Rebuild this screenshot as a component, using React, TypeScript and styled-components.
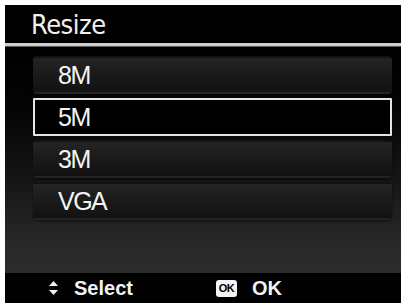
import React from "react";
import styled, { createGlobalStyle } from "styled-components";

const GlobalStyle = createGlobalStyle`
  html, body {
    margin: 0;
    padding: 0;
    background: #ffffff;
  }
  body {
    font-family: "Liberation Sans", Arial, sans-serif;
  }
`;

const Page = styled.div`
  width: 403px;
  height: 303px;
  padding: 5px 0 0 5px;
  box-sizing: border-box;
  overflow: hidden;
`;

const Screen = styled.div`
  width: 396px;
  height: 298px;
  background: #000;
  display: flex;
  flex-direction: column;
  color: #f2f2f2;
`;

const Header = styled.div`
  height: 38px;
  display: flex;
  align-items: center;
  padding-left: 26px;
  font-family: "Liberation Sans Narrow", "DejaVu Sans Condensed", "Liberation Sans", sans-serif;
  font-size: 27px;
  letter-spacing: -0.5px;
  color: #f0f0f0;
`;

const Divider = styled.div`
  height: 3px;
  background: #cfcfcf;
  border-bottom: 1px solid #5a5a5a;
`;

const Body = styled.div`
  flex: 1;
  display: flex;
  flex-direction: column;
  gap: 4px;
  padding: 9px 4px 0 28px;
  background: linear-gradient(
    to bottom,
    #000 0%,
    #050505 30%,
    #161616 60%,
    #272727 85%,
    #2c2c2c 100%
  );
`;

const Row = styled.div<{ $selected?: boolean }>`
  width: 359px;
  height: 38px;
  box-sizing: border-box;
  display: flex;
  align-items: center;
  padding-left: 23px;
  font-size: 25px;
  letter-spacing: -1.5px;
  color: #f4f4f4;
  border: 2px solid ${(p) => (p.$selected ? "#e4e4e4" : "transparent")};
  border-radius: ${(p) => (p.$selected ? "1px" : "4px")};
  background: ${(p) =>
    p.$selected
      ? "#000"
      : "linear-gradient(to bottom, #242424 0%, #1b1b1b 45%, #121212 100%)"};
  box-shadow: ${(p) => (p.$selected ? "none" : "0 1px 2px rgba(0,0,0,0.6)")};
`;

const Footer = styled.div`
  height: 30px;
  background: #000;
  display: flex;
  align-items: center;
  padding-left: 43px;
  font-weight: bold;
  font-size: 20px;
  color: #f2f2f2;
`;

const Hint = styled.div<{ $width?: number }>`
  display: flex;
  align-items: center;
  gap: 15px;
  width: ${(p) => (p.$width ? `${p.$width}px` : "auto")};
`;

const OkBadge = styled.span`
  width: 21px;
  height: 17px;
  border-radius: 3px;
  background: #f4f4f4;
  color: #000;
  font-size: 11px;
  font-weight: bold;
  letter-spacing: -0.5px;
  display: flex;
  align-items: center;
  justify-content: center;
`;

const items = ["8M", "5M", "3M", "VGA"];

const UpDownIcon = () => (
  <svg width="11" height="16" viewBox="0 0 11 16">
    <polygon points="5.5,1 10,6 1,6" fill="#f2f2f2" />
    <polygon points="1,10 10,10 5.5,15" fill="#f2f2f2" />
  </svg>
);

export default function App() {
  return (
    <Page>
      <GlobalStyle />
      <Screen>
        <Header>Resize</Header>
        <Divider />
        <Body>
          {items.map((item) => (
            <Row key={item} $selected={item === "5M"}>
              {item}
            </Row>
          ))}
        </Body>
        <Footer>
          <Hint $width={168}>
            <UpDownIcon />
            Select
          </Hint>
          <Hint>
            <OkBadge>OK</OkBadge>
            OK
          </Hint>
        </Footer>
      </Screen>
    </Page>
  );
}
